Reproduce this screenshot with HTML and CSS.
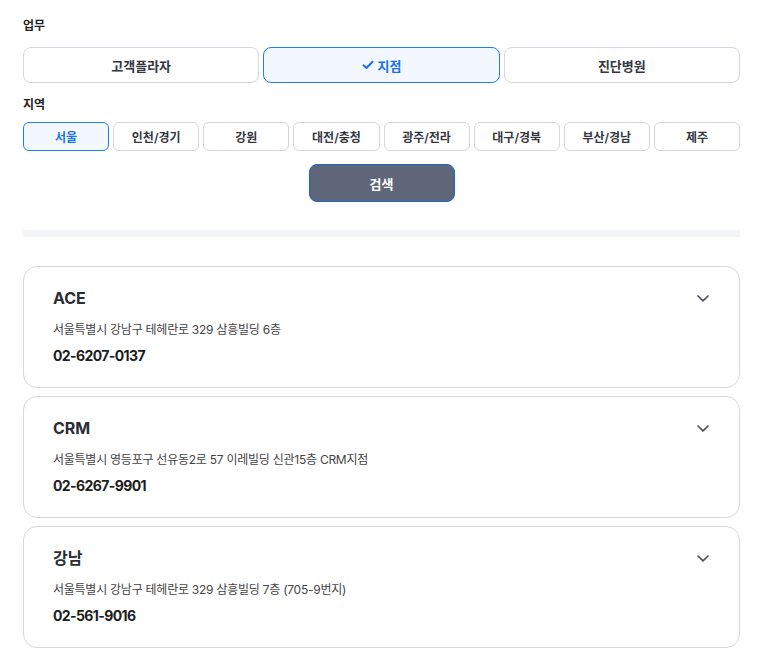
FILE: index.html
```html
<!DOCTYPE html>
<html lang="ko">
<head>
    <meta charset="UTF-8">
    <meta name="viewport" content="width=device-width, initial-scale=1.0">
    <title>지점 찾기</title>
    <link rel="stylesheet" href="styles.css">
</head>
<body>

<div class="container">
    <!-- 업무 -->
    <p class="label">업무</p>
    <div class="biz-row">
        <button class="biz-btn">고객플라자</button>
        <button class="biz-btn active">
            <svg class="check" width="12" height="10" viewBox="0 0 12 10"><path d="M1.5 5.2 L4.5 8 L10.5 1.8" fill="none" stroke="currentColor" stroke-width="2" stroke-linecap="round" stroke-linejoin="round"/></svg>
            지점
        </button>
        <button class="biz-btn">진단병원</button>
    </div>

    <!-- 지역 -->
    <p class="label label-region">지역</p>
    <div class="region-row">
        <button class="region-btn active">서울</button>
        <button class="region-btn">인천/경기</button>
        <button class="region-btn">강원</button>
        <button class="region-btn">대전/충청</button>
        <button class="region-btn">광주/전라</button>
        <button class="region-btn">대구/경북</button>
        <button class="region-btn">부산/경남</button>
        <button class="region-btn">제주</button>
    </div>

    <div class="search-wrap">
        <button class="search-btn">검색</button>
    </div>

    <div class="divider"></div>

    <!-- 결과 목록 -->
    <div class="list">
        <div class="card">
            <div class="card-head">
                <h3>ACE</h3>
                <svg class="chevron" width="14" height="9" viewBox="0 0 14 9"><path d="M2 2 L7 6.8 L12 2" fill="none" stroke="currentColor" stroke-width="1.7" stroke-linecap="round" stroke-linejoin="round"/></svg>
            </div>
            <p class="addr">서울특별시 강남구 테헤란로 329 삼흥빌딩 6층</p>
            <p class="tel">02-6207-0137</p>
        </div>
        <div class="card">
            <div class="card-head">
                <h3>CRM</h3>
                <svg class="chevron" width="14" height="9" viewBox="0 0 14 9"><path d="M2 2 L7 6.8 L12 2" fill="none" stroke="currentColor" stroke-width="1.7" stroke-linecap="round" stroke-linejoin="round"/></svg>
            </div>
            <p class="addr">서울특별시 영등포구 선유동2로 57 이레빌딩 신관15층 CRM지점</p>
            <p class="tel">02-6267-9901</p>
        </div>
        <div class="card">
            <div class="card-head">
                <h3>강남</h3>
                <svg class="chevron" width="14" height="9" viewBox="0 0 14 9"><path d="M2 2 L7 6.8 L12 2" fill="none" stroke="currentColor" stroke-width="1.7" stroke-linecap="round" stroke-linejoin="round"/></svg>
            </div>
            <p class="addr">서울특별시 강남구 테헤란로 329 삼흥빌딩 7층 (705-9번지)</p>
            <p class="tel">02-561-9016</p>
        </div>
    </div>
</div>

</body>
</html>
```

FILE: styles.css
```css
body {
    margin: 0;
    font-family: Inter, "Noto Sans CJK KR", sans-serif;
    background-color: #fff;
    color: #222;
}
.container {
    padding: 17px 19px 0 23px;
}
.label {
    margin: 0 0 12px;
    font-size: 12px;
    line-height: 18px;
    font-weight: 700;
    color: #1f1f1f;
}
.label-region {
    margin: 13px 0 8px;
}
button {
    font-family: inherit;
    cursor: pointer;
    background-color: #fff;
}
.biz-row {
    display: grid;
    grid-template-columns: repeat(3, 1fr);
    gap: 4px;
}
.biz-btn {
    height: 36px;
    border: 1px solid #d3d6de;
    border-radius: 8px;
    font-size: 13px;
    font-weight: 600;
    color: #33363d;
    display: flex;
    justify-content: center;
    align-items: center;
    gap: 4px;
}
.biz-btn.active,
.region-btn.active {
    border-color: #1f7ff0;
    background-color: #f3f8fe;
    color: #1772e6;
    font-weight: 700;
}
.check {
    color: #1772e6;
}
.region-row {
    display: grid;
    grid-template-columns: repeat(8, 1fr);
    gap: 4px;
}
.region-btn {
    height: 29px;
    border: 1px solid #d3d6de;
    border-radius: 6px;
    font-size: 12px;
    font-weight: 600;
    color: #33363d;
    padding: 0;
}
.search-wrap {
    display: flex;
    justify-content: center;
    margin-top: 13px;
}
.search-btn {
    width: 146px;
    height: 38px;
    border: 1px solid #1a66c9;
    border-radius: 8px;
    background-color: #5f6679;
    color: #fff;
    font-size: 13px;
    font-weight: 700;
}
.divider {
    height: 7px;
    background-color: #f3f4f8;
    margin-top: 28px;
}
.list {
    display: flex;
    flex-direction: column;
    gap: 8px;
    margin-top: 29px;
}
.card {
    border: 1px solid #d5d8e0;
    border-radius: 14px;
    padding: 21px 29px 21px;
}
.card-head {
    display: flex;
    justify-content: space-between;
    align-items: center;
}
.card-head h3 {
    margin: 0;
    font-size: 16px;
    line-height: 20px;
    font-weight: 700;
    color: #2a2d33;
}
.chevron {
    color: #4b5266;
}
.addr {
    margin: 13px 0 0;
    font-size: 12px;
    line-height: 18px;
    color: #444;
    letter-spacing: -0.25px;
}
.tel {
    margin: 7px 0 0;
    font-size: 14px;
    line-height: 20px;
    font-weight: 700;
    color: #1c1d20;
    letter-spacing: -0.6px;
}
```
